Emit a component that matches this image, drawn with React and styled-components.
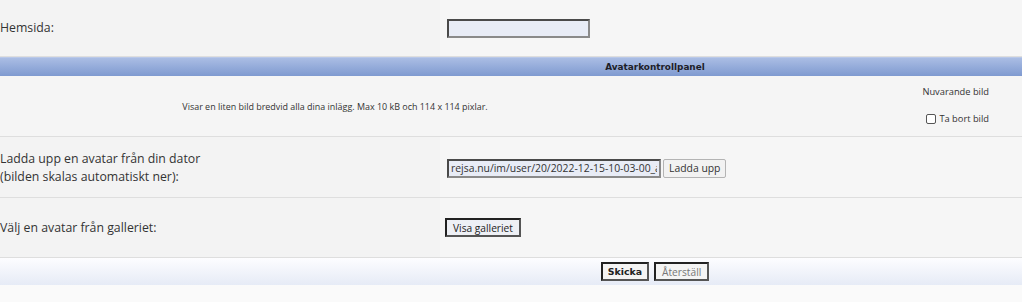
import styled, { createGlobalStyle } from 'styled-components';

const GlobalStyle = createGlobalStyle`
  html, body {
    margin: 0;
    padding: 0;
    background: #fafafa;
  }
  body {
    font-family: 'Open Sans', 'Liberation Sans', sans-serif;
    color: #333333;
  }
`;

const Page = styled.div`
  width: 1022px;
  height: 302px;
  overflow: hidden;
  background: #fafafa;
`;

const Row = styled.div`
  display: grid;
  grid-template-columns: 440px 1fr;
  height: ${(p) => p.h}px;
  border-bottom: 1px solid #dedede;
  box-shadow: 0 1px 0 #ffffff;
`;

const Label = styled.div`
  display: flex;
  flex-direction: column;
  justify-content: center;
  background: #f3f3f3;
  font-size: 12.3px;
  line-height: 18px;
  color: #333;
  padding-top: ${(p) => p.pt || 0}px;
`;

const Field = styled.div`
  display: flex;
  align-items: center;
  gap: 2px;
  background: #f6f6f6;
  padding-left: ${(p) => p.pl || 7}px;
  padding-top: ${(p) => p.pt || 0}px;
`;

const TextBox = styled.input`
  box-sizing: border-box;
  width: ${(p) => p.w}px;
  height: 19px;
  padding: 0 2px;
  border: 2px solid #4a4a4a;
  border-right-color: #8a8a8a;
  border-bottom-color: #8a8a8a;
  background: #e8ecf6;
  font-family: 'Open Sans', 'Liberation Sans', sans-serif;
  font-size: 10.4px;
  color: #333;
  outline: none;
`;

const PlainButton = styled.button`
  height: 19px;
  padding: 0 5px;
  border: 1px solid #b4b4b4;
  border-radius: 2px;
  background: #f2f2f2;
  font-family: 'Open Sans', 'Liberation Sans', sans-serif;
  font-size: 10.4px;
  color: #333;
`;

const DarkButton = styled.button`
  box-sizing: border-box;
  height: 19px;
  padding: 0 ${(p) => (p.bold ? 5 : 6)}px;
  border: 2px solid #222;
  border-right-color: #555;
  border-bottom-color: #555;
  background: ${(p) => p.bg || '#eef0f5'};
  font-family: ${(p) =>
    p.bold ? "'DejaVu Sans', Verdana, sans-serif" : "'Open Sans', 'Liberation Sans', sans-serif"};
  font-size: ${(p) => (p.bold ? 9.4 : 10.2)}px;
  font-weight: ${(p) => (p.bold ? 700 : 400)};
  color: ${(p) => (p.dim ? '#777' : '#222')};
`;

const HeaderBar = styled.div`
  height: 18px;
  padding-left: 288px;
  display: flex;
  align-items: center;
  justify-content: center;
  border-top: 1px solid #b9c8e8;
  background: linear-gradient(#aabde4, #7f9ad0);
  font-family: 'DejaVu Sans', Verdana, sans-serif;
  font-size: 8.9px;
  font-weight: 700;
  color: #1e1e28;
`;

const InfoRow = styled.div`
  display: grid;
  grid-template-columns: 670px 1fr;
  height: 60px;
  background: #f5f5f5;
  border-bottom: 1px solid #dedede;
  box-shadow: 0 1px 0 #ffffff;
`;

const InfoText = styled.div`
  display: flex;
  align-items: center;
  justify-content: center;
  padding-top: 1px;
  font-size: 8.95px;
  color: #333;
`;

const AvatarBox = styled.div`
  display: flex;
  flex-direction: column;
  align-items: flex-end;
  padding: 9px 33px 0 0;
  gap: 14px;
  font-size: 9.3px;
  color: #333;
`;

const CheckLabel = styled.label`
  display: flex;
  align-items: center;
  gap: 3px;
`;

const Check = styled.span`
  width: 8px;
  height: 8px;
  border: 1px solid #555;
  border-radius: 2px;
  background: #fff;
`;

const Footer = styled.div`
  height: 27px;
  padding-left: 288px;
  display: flex;
  align-items: center;
  justify-content: center;
  gap: 5px;
  background: linear-gradient(#fdfdff, #e6ebf6);
`;

export default function App() {
  return (
    <Page>
      <GlobalStyle />
      <Row h={56}>
        <Label>Hemsida:</Label>
        <Field>
          <TextBox w={143} defaultValue="" />
        </Field>
      </Row>
      <HeaderBar>Avatarkontrollpanel</HeaderBar>
      <InfoRow>
        <InfoText>Visar en liten bild bredvid alla dina inlägg. Max 10 kB och 114 x 114 pixlar.</InfoText>
        <AvatarBox>
          <span>Nuvarande bild</span>
          <CheckLabel>
            <Check />
            Ta bort bild
          </CheckLabel>
        </AvatarBox>
      </InfoRow>
      <Row h={60}>
        <Label pt={2}>
          <span>Ladda upp en avatar från din dator</span>
          <span>(bilden skalas automatiskt ner):</span>
        </Label>
        <Field pt={2}>
          <TextBox w={214} defaultValue="rejsa.nu/im/user/20/2022-12-15-10-03-00_avatar.jpg" />
          <PlainButton>Ladda upp</PlainButton>
        </Field>
      </Row>
      <Row h={59}>
        <Label>Välj en avatar från galleriet:</Label>
        <Field pl={5}>
          <DarkButton>Visa galleriet</DarkButton>
        </Field>
      </Row>
      <Footer>
        <DarkButton bold bg="#f4f4f4">Skicka</DarkButton>
        <DarkButton dim bg="#f4f4f4">Återställ</DarkButton>
      </Footer>
    </Page>
  );
}
